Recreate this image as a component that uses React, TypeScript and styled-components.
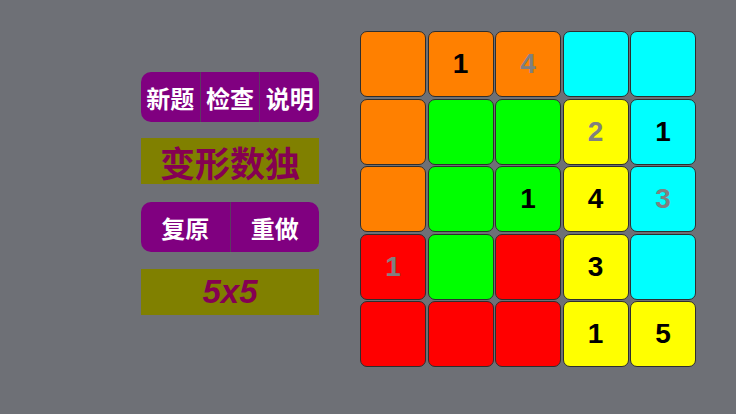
import React from "react";
import styled, { createGlobalStyle } from "styled-components";

const Global = createGlobalStyle`
  html, body { margin: 0; padding: 0; background: #6e7076; }
  body { width: 736px; height: 414px; overflow: hidden; }
`;

const Page = styled.div`
  display: flex;
  align-items: flex-start;
  gap: 41px;
  padding: 31px 0 0 141px;
  width: 736px;
  height: 414px;
  box-sizing: border-box;
  background: #6e7076;
`;

const Side = styled.div`
  display: flex;
  flex-direction: column;
  width: 178px;
  margin-top: 41px;
`;

const ButtonGroup = styled.div<{ $mt?: number }>`
  display: flex;
  height: 50px;
  margin-top: ${(p) => p.$mt ?? 0}px;
  border-radius: 10px;
  overflow: hidden;
  background: #800080;
`;

const Btn = styled.div`
  flex: 1;
  display: flex;
  align-items: center;
  justify-content: center;
  color: #ffffff;
  font-family: "Noto Sans CJK SC", "Noto Sans", sans-serif;
  font-weight: 700;
  font-size: 24px;
  letter-spacing: 0;
  white-space: nowrap;
  & + & { border-left: 1px solid #5c3a62; }
`;

const Banner = styled.div<{ $mt: number; $latin?: boolean }>`
  height: 46px;
  margin-top: ${(p) => p.$mt}px;
  background: #808000;
  display: flex;
  align-items: center;
  justify-content: center;
  color: #850052;
  font-weight: 700;
  font-family: ${(p) =>
    p.$latin ? `"Liberation Sans", Arial, sans-serif` : `"Noto Sans CJK SC", sans-serif`};
  font-size: ${(p) => (p.$latin ? 33 : 35)}px;
  font-style: ${(p) => (p.$latin ? "italic" : "normal")};
`;

const Board = styled.div`
  display: grid;
  grid-template-columns: repeat(5, 66px);
  grid-auto-rows: 66px;
  gap: 1.5px;
`;

const Cell = styled.div<{ $bg: string; $given: boolean }>`
  box-sizing: border-box;
  border: 1px solid #2e2e2e;
  border-radius: 7px;
  background: ${(p) => p.$bg};
  display: flex;
  align-items: center;
  justify-content: center;
  font-family: "Liberation Sans", Arial, sans-serif;
  font-weight: 700;
  font-size: 28px;
  color: ${(p) => (p.$given ? "#000000" : "#808080")};
`;

const C: Record<string, string> = {
  o: "#ff8000",
  g: "#00ff00",
  y: "#ffff00",
  c: "#00ffff",
  r: "#ff0000",
};

const colors = ["ooocc", "oggyc", "oggyc", "rgryc", "rrryy"].map((s) => s.split(""));

// value, given(black)=true / gray=false
const values: ([string, boolean] | null)[][] = [
  [null, ["1", true], ["4", false], null, null],
  [null, null, null, ["2", false], ["1", true]],
  [null, null, ["1", true], ["4", true], ["3", false]],
  [["1", false], null, null, ["3", true], null],
  [null, null, null, ["1", true], ["5", true]],
];

export default function App() {
  return (
    <>
      <Global />
      <Page>
        <Side>
          <ButtonGroup>
            <Btn>新题</Btn>
            <Btn>检查</Btn>
            <Btn>说明</Btn>
          </ButtonGroup>
          <Banner $mt={16}>变形数独</Banner>
          <ButtonGroup $mt={18}>
            <Btn>复原</Btn>
            <Btn>重做</Btn>
          </ButtonGroup>
          <Banner $mt={17} $latin>
            5x5
          </Banner>
        </Side>
        <Board>
          {colors.map((row, r) =>
            row.map((k, c) => {
              const v = values[r][c];
              return (
                <Cell key={`${r}-${c}`} $bg={C[k]} $given={v ? v[1] : true}>
                  {v ? v[0] : ""}
                </Cell>
              );
            })
          )}
        </Board>
      </Page>
    </>
  );
}
